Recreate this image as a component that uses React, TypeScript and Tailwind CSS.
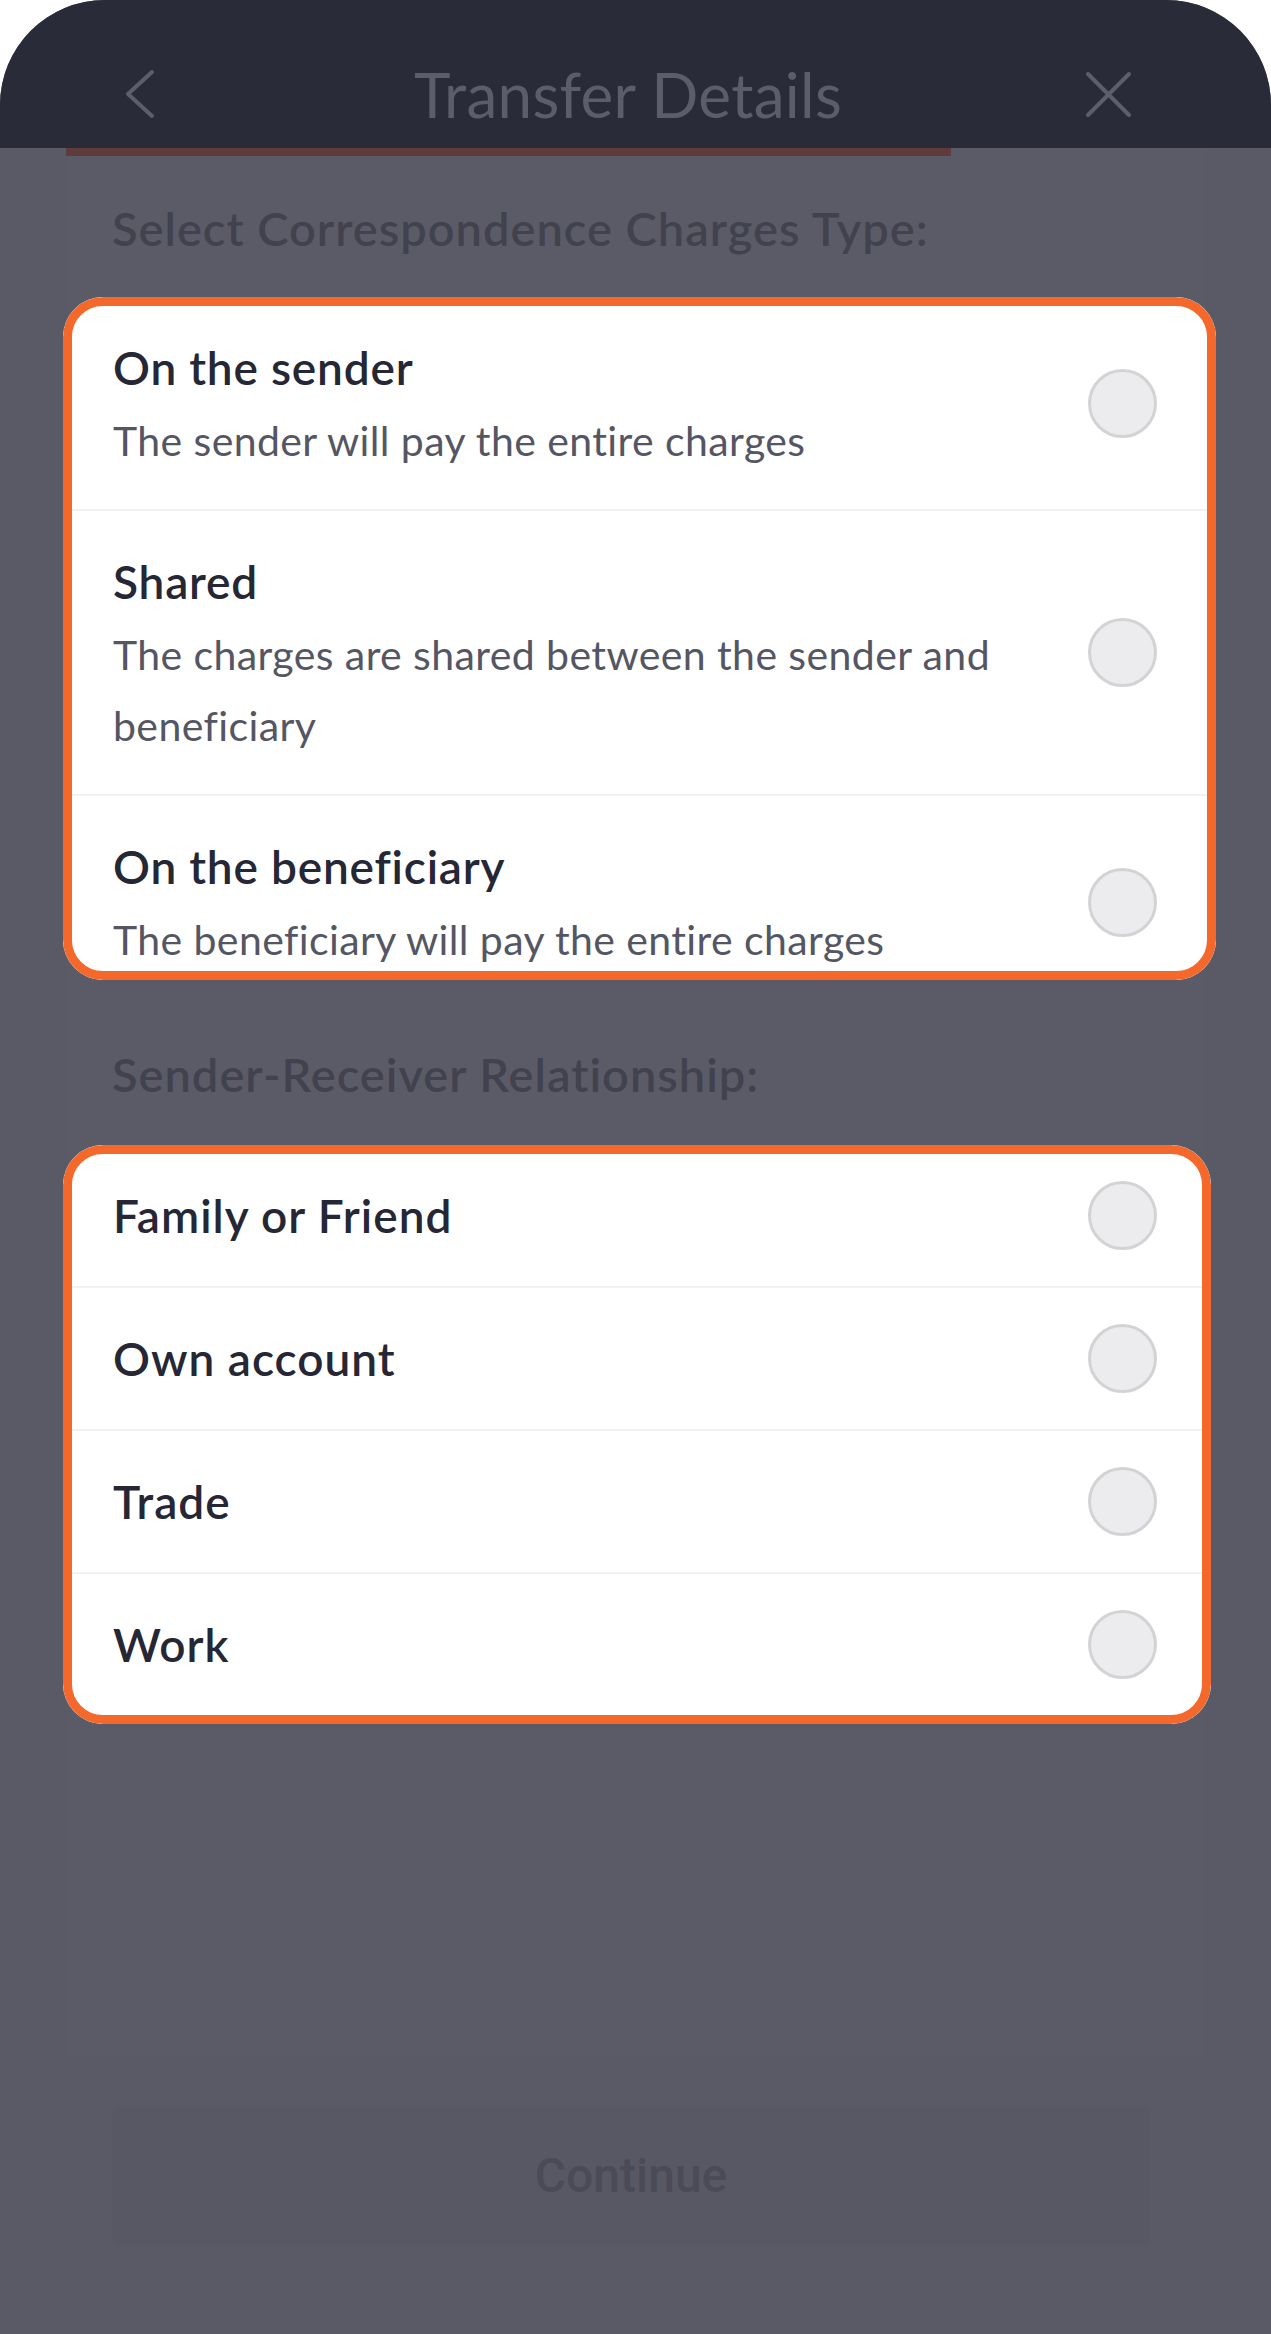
const charges = [
  { title: "On the sender", desc: "The sender will pay the entire charges" },
  {
    title: "Shared",
    desc: "The charges are shared between the sender and beneficiary",
  },
  {
    title: "On the beneficiary",
    desc: "The beneficiary will pay the entire charges",
  },
];

const relations = ["Family or Friend", "Own account", "Trade", "Work"];

function Radio() {
  return (
    <div className="h-[69px] w-[69px] shrink-0 rounded-full border-[3px] border-[#d3d3d6] bg-[#ececee]" />
  );
}

function Ring() {
  return (
    <div className="pointer-events-none absolute inset-0 rounded-[40px] border-[9px] border-[#f4682b]" />
  );
}

export default function App() {
  return (
    <div className="h-[2334px] w-[1271px] bg-white font-['Lato',sans-serif]">
      <div className="flex h-full flex-col overflow-hidden rounded-t-[105px] bg-[#5a5a66]">
        {/* header */}
        <header className="grid h-[148px] shrink-0 grid-cols-[1fr_auto_1fr] items-center bg-[#2a2b39] px-[124px] pt-[40px] pr-[139px]">
          <svg width="32" height="50" viewBox="0 0 32 50" className="justify-self-start">
            <polyline
              points="28,3 4,25 28,47"
              fill="none"
              stroke="#5d5e6c"
              strokeWidth="4"
              strokeLinecap="round"
              strokeLinejoin="round"
            />
          </svg>
          <h1 className="text-[62px] leading-none font-normal tracking-[0.3px] text-[#5c5d6b]">
            Transfer Details
          </h1>
          <svg width="47" height="47" viewBox="0 0 47 47" className="justify-self-end">
            <path
              d="M3 3 L44 44 M44 3 L3 44"
              fill="none"
              stroke="#5d5e6c"
              strokeWidth="4"
              strokeLinecap="round"
            />
          </svg>
        </header>

        {/* sheet */}
        <main className="ml-[66px] flex h-[1908px] w-[1139px] shrink-0 flex-col bg-[#5b5b67]">
          <div className="h-[8px] w-[885px] bg-[#5f3b3b]" />

          <h2 className="mt-[42px] pl-[46px] text-[47px] leading-[60px] font-semibold tracking-[1px] text-[#41424e]">
            Select Correspondence Charges Type:
          </h2>

          <div className="relative -ml-[3px] mt-[39px] h-[683px] w-[1153px] overflow-hidden rounded-[40px] bg-white">
            {charges.map((c, i) => (
              <div
                key={c.title}
                className={`flex items-center justify-between py-[33px] pr-[59px] pl-[50px] ${
                  i < charges.length - 1 ? "border-b-2 border-[#f1f1f4]" : ""
                }`}
              >
                <div className="max-w-[920px]">
                  <div className="text-[46px] leading-[75px] font-semibold tracking-[0.8px] text-[#262735]">
                    {c.title}
                  </div>
                  <div className="text-[41px] leading-[71px] tracking-[0.4px] text-[#555663]">
                    {c.desc}
                  </div>
                </div>
                <Radio />
              </div>
            ))}
            <Ring />
          </div>

          <h2 className="mt-[64px] pl-[46px] text-[47px] leading-[60px] font-semibold tracking-[1px] text-[#41424e]">
            Sender-Receiver Relationship:
          </h2>

          <div className="relative -ml-[3px] mt-[41px] h-[579px] w-[1148px] overflow-hidden rounded-[40px] bg-white">
            {relations.map((r, i) => (
              <div
                key={r}
                className={`flex h-[141px] items-center justify-between pr-[54px] pl-[50px] ${
                  i < relations.length - 1 ? "border-b-2 border-[#f1f1f4] box-content" : ""
                }`}
              >
                <span className="text-[46px] leading-[75px] font-semibold tracking-[1px] text-[#262735]">
                  {r}
                </span>
                <Radio />
              </div>
            ))}
            <Ring />
          </div>
        </main>

        {/* footer */}
        <div className="flex-1">
          <button
            type="button"
            className="mt-[49px] ml-[112px] flex h-[142px] w-[1038px] items-center justify-center rounded-[8px] bg-[#585865] font-['Roboto',sans-serif] text-[48px] font-medium text-[#4a4b57]"
          >
            Continue
          </button>
        </div>
      </div>
    </div>
  );
}
